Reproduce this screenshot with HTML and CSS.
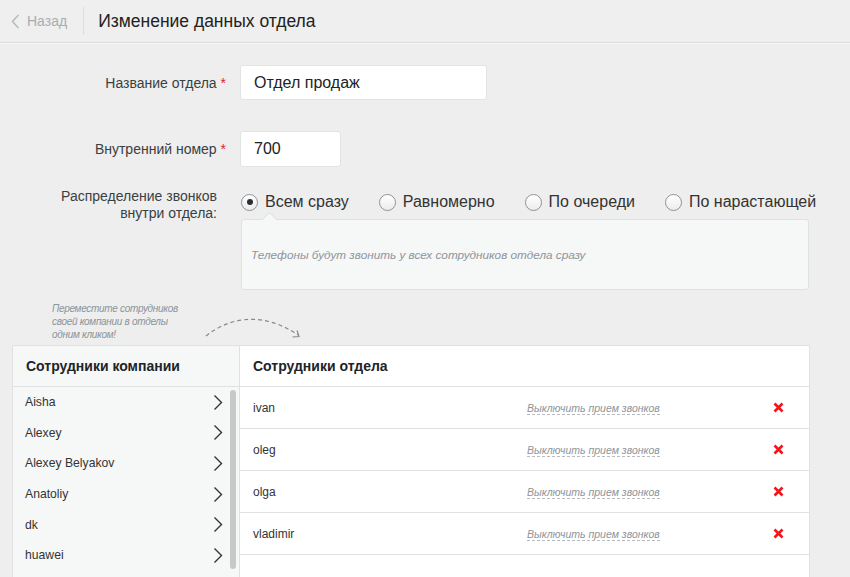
FILE: index.html
```html
<!DOCTYPE html>
<html lang="ru">
<head>
<meta charset="utf-8">
<title>Изменение данных отдела</title>
<link rel="stylesheet" href="styles.css">
</head>
<body>
<header class="topbar">
  <a class="back" href="#">
    <svg class="back-icon" width="9" height="15" viewBox="0 0 9 15"><polyline points="7.5,1 1.5,7.5 7.5,14" fill="none" stroke="#b9bcbe" stroke-width="1.6"/></svg>
    <span>Назад</span>
  </a>
  <span class="sep"></span>
  <h1 class="title">Изменение данных отдела</h1>
</header>

<main class="form">
  <div class="field-row">
    <label class="label">Название отдела <span class="req">*</span></label>
    <div class="control"><div class="input input-wide">Отдел продаж</div></div>
  </div>

  <div class="field-row row-gap">
    <label class="label">Внутренний номер <span class="req">*</span></label>
    <div class="control"><div class="input input-short">700</div></div>
  </div>

  <div class="field-row row-gap-sm">
    <label class="label label-multi">Распределение звонков<br>внутри отдела:</label>
    <div class="control">
      <div class="radios">
        <span class="radio-opt"><span class="radio checked"></span>Всем сразу</span>
        <span class="radio-opt"><span class="radio"></span>Равномерно</span>
        <span class="radio-opt"><span class="radio"></span>По очереди</span>
        <span class="radio-opt"><span class="radio"></span>По нарастающей</span>
      </div>
      <div class="info">Телефоны будут звонить у всех сотрудников отдела сразу</div>
    </div>
  </div>

  <div class="hint">
    <p class="hint-text">Переместите сотрудников<br>своей компании в отделы<br>одним кликом!</p>
    <svg class="hint-arrow" width="100" height="26" viewBox="0 0 100 26">
      <path d="M2 20 C 28 -1, 62 -3, 94 19" fill="none" stroke="#7f8b91" stroke-width="1.2" stroke-dasharray="4 3"/>
      <polyline points="88.5,21 95,20.5 93,14.5" fill="none" stroke="#7f8b91" stroke-width="1.2"/>
    </svg>
  </div>

  <section class="panel">
    <div class="col col-company">
      <div class="col-head">Сотрудники компании</div>
      <div class="list">
        <div class="list-item"><span>Aisha</span><svg class="chev" width="10" height="17" viewBox="0 0 10 17"><polyline points="1.5,1.5 8.5,8.5 1.5,15.5" fill="none" stroke="#333" stroke-width="1.4"/></svg></div>
        <div class="list-item"><span>Alexey</span><svg class="chev" width="10" height="17" viewBox="0 0 10 17"><polyline points="1.5,1.5 8.5,8.5 1.5,15.5" fill="none" stroke="#333" stroke-width="1.4"/></svg></div>
        <div class="list-item"><span>Alexey Belyakov</span><svg class="chev" width="10" height="17" viewBox="0 0 10 17"><polyline points="1.5,1.5 8.5,8.5 1.5,15.5" fill="none" stroke="#333" stroke-width="1.4"/></svg></div>
        <div class="list-item"><span>Anatoliy</span><svg class="chev" width="10" height="17" viewBox="0 0 10 17"><polyline points="1.5,1.5 8.5,8.5 1.5,15.5" fill="none" stroke="#333" stroke-width="1.4"/></svg></div>
        <div class="list-item"><span>dk</span><svg class="chev" width="10" height="17" viewBox="0 0 10 17"><polyline points="1.5,1.5 8.5,8.5 1.5,15.5" fill="none" stroke="#333" stroke-width="1.4"/></svg></div>
        <div class="list-item"><span>huawei</span><svg class="chev" width="10" height="17" viewBox="0 0 10 17"><polyline points="1.5,1.5 8.5,8.5 1.5,15.5" fill="none" stroke="#333" stroke-width="1.4"/></svg></div>
        <span class="scrollbar"></span>
      </div>
    </div>
    <div class="col col-dept">
      <div class="col-head">Сотрудники отдела</div>
      <div class="dept-row"><span class="name">ivan</span><span class="action"><span class="dotted">Выключить прием звонков</span></span><svg class="remove" width="11" height="11" viewBox="0 0 11 11"><path d="M1.5 1.5 L9.5 9.5 M9.5 1.5 L1.5 9.5" stroke="#f2151b" stroke-width="2.6"/></svg></div>
      <div class="dept-row"><span class="name">oleg</span><span class="action"><span class="dotted">Выключить прием звонков</span></span><svg class="remove" width="11" height="11" viewBox="0 0 11 11"><path d="M1.5 1.5 L9.5 9.5 M9.5 1.5 L1.5 9.5" stroke="#f2151b" stroke-width="2.6"/></svg></div>
      <div class="dept-row"><span class="name">olga</span><span class="action"><span class="dotted">Выключить прием звонков</span></span><svg class="remove" width="11" height="11" viewBox="0 0 11 11"><path d="M1.5 1.5 L9.5 9.5 M9.5 1.5 L1.5 9.5" stroke="#f2151b" stroke-width="2.6"/></svg></div>
      <div class="dept-row"><span class="name">vladimir</span><span class="action"><span class="dotted">Выключить прием звонков</span></span><svg class="remove" width="11" height="11" viewBox="0 0 11 11"><path d="M1.5 1.5 L9.5 9.5 M9.5 1.5 L1.5 9.5" stroke="#f2151b" stroke-width="2.6"/></svg></div>
    </div>
  </section>
</main>
</body>
</html>
```

FILE: styles.css
```css
* { box-sizing: border-box; }

html, body {
  margin: 0;
  padding: 0;
  background: #eeeeee;
  font-family: "Liberation Sans", Arial, sans-serif;
  color: #333;
  overflow: hidden;
}

.topbar {
  height: 43px;
  display: flex;
  align-items: center;
  background: #efefef;
  border-bottom: 1px solid #dcdcdc;
  box-shadow: 0 1px 0 #f8f8f8;
}

.back {
  display: flex;
  align-items: center;
  gap: 7px;
  margin-left: 11px;
  color: #a9adb0;
  font-size: 14px;
  text-decoration: none;
}

.sep {
  width: 1px;
  height: 28px;
  background: #dcdcdc;
  margin-left: 16px;
}

.title {
  margin: 0 0 0 14px;
  font-size: 17.5px;
  font-weight: normal;
  color: #222;
}

.form {
  padding-top: 22px;
}

.field-row {
  display: grid;
  grid-template-columns: 226px 1fr;
  column-gap: 14px;
  align-items: center;
}

.row-gap { margin-top: 31px; }
.row-gap-sm { margin-top: 22px; align-items: start; }

.label {
  text-align: right;
  font-size: 14px;
  color: #3a3f42;
}

.label-multi {
  line-height: 17px;
  padding-right: 9px;
  margin-top: -1px;
}

.req { color: #e0242a; }

.input {
  background: #fff;
  border: 1px solid #e2e3e4;
  border-radius: 3px;
  font-size: 16px;
  color: #222;
  padding-left: 13px;
  display: flex;
  align-items: center;
}

.input-wide { width: 247px; height: 35px; }
.input-short { width: 101px; height: 36px; }

.radios {
  display: flex;
  align-items: center;
  gap: 30px;
  height: 26px;
  padding-left: 1px;
}

.radio-opt {
  display: flex;
  align-items: center;
  gap: 7px;
  font-size: 16px;
  color: #333;
}

.radio {
  width: 17px;
  height: 17px;
  border-radius: 50%;
  border: 1px solid #8f9396;
  background: linear-gradient(#ffffff, #ececec);
  display: flex;
  align-items: center;
  justify-content: center;
}

.radio.checked::after {
  content: "";
  width: 6px;
  height: 6px;
  border-radius: 50%;
  background: #2b2f33;
}

.info {
  position: relative;
  margin-top: 4px;
  margin-left: 1px;
  width: 568px;
  height: 71px;
  background: #f6f7f7;
  border: 1px solid #dfe1e2;
  border-radius: 3px;
  display: flex;
  align-items: center;
  padding-left: 9px;
  font-size: 11.75px;
  font-style: italic;
  color: #8d959a;
}

.info::before {
  content: "";
  position: absolute;
  top: -6px;
  left: 22px;
  width: 10px;
  height: 10px;
  background: #f6f7f7;
  border-left: 1px solid #dfe1e2;
  border-top: 1px solid #dfe1e2;
  transform: rotate(45deg);
}

.hint {
  display: flex;
  align-items: flex-end;
  margin-top: 12px;
  padding-left: 52px;
}

.hint-text {
  margin: 0;
  font-size: 10px;
  line-height: 13px;
  letter-spacing: -0.3px;
  font-style: italic;
  color: #8a9499;
  width: 150px;
}

.hint-arrow {
  display: block;
  margin-left: 2px;
  margin-bottom: -1px;
}

.panel {
  margin: 4px 0 0 12px;
  width: 798px;
  height: 260px;
  display: grid;
  grid-template-columns: 227px 1fr;
  border: 1px solid #dfe1e2;
  background: #fff;
}

.col-company {
  background: #f6f7f7;
  border-right: 1px solid #dfe1e2;
}

.col-head {
  height: 41px;
  border-bottom: 1px solid #dfe1e2;
  display: flex;
  align-items: center;
  font-size: 14px;
  font-weight: bold;
  color: #1e2428;
}

.col-company .col-head { padding-left: 13px; }
.col-dept .col-head { padding-left: 13px; }

.list {
  position: relative;
  padding-right: 16px;
}

.list-item {
  height: 30.6px;
  display: flex;
  align-items: center;
  justify-content: space-between;
  padding-left: 12px;
  font-size: 12.2px;
  color: #333;
}

.chev { display: block; }

.scrollbar {
  position: absolute;
  top: 3px;
  right: 3px;
  width: 6px;
  height: 179px;
  border-radius: 3px;
  background: #c6c8ca;
}

.dept-row {
  height: 42px;
  border-bottom: 1px solid #dfe1e2;
  display: grid;
  grid-template-columns: 274px 1fr 40px;
  align-items: center;
  padding: 0 11px 0 13px;
  font-size: 12px;
  color: #333;
}

.action { font-size: 10.5px; }

.dotted {
  font-style: italic;
  color: #8d959a;
  border-bottom: 1px dashed #b5bbbf;
}

.remove {
  display: block;
  justify-self: center;
}
```
